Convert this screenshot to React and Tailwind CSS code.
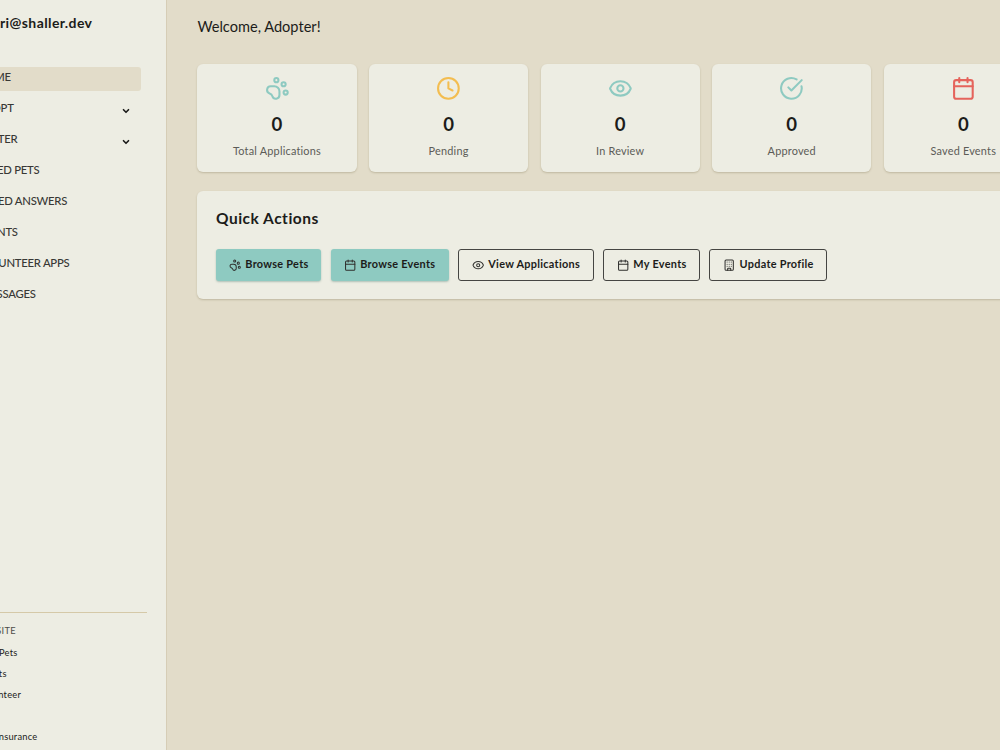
import { Building, Calendar, ChevronDown, CircleCheckBig, Clock, Eye, PawPrint } from "lucide-react";

const navItems = [
  { label: "HOME", active: true, indent: "ml-[5px]" },
  { label: "ADOPT", expandable: true, indent: "ml-[4px]" },
  { label: "FOSTER", expandable: true, indent: "ml-[5px]" },
  { label: "SAVED PETS", indent: "ml-[5px]" },
  { label: "SAVED ANSWERS", indent: "ml-[6px]" },
  { label: "EVENTS", indent: "ml-[5px]" },
  { label: "VOLUNTEER APPS", indent: "ml-[5px]" },
  { label: "MESSAGES", indent: "ml-[8px]" },
];

const stats = [
  { label: "Total Applications", value: 0, icon: PawPrint, color: "text-[#8ecac1]" },
  { label: "Pending", value: 0, icon: Clock, color: "text-[#f3bd50]" },
  { label: "In Review", value: 0, icon: Eye, color: "text-[#8ecac1]" },
  { label: "Approved", value: 0, icon: CircleCheckBig, color: "text-[#8ecac1]" },
  { label: "Saved Events", value: 0, icon: Calendar, color: "text-[#e5645c]" },
];

const actions = [
  { label: "Browse Pets", icon: PawPrint, primary: true, width: "w-[105.5px]" },
  { label: "Browse Events", icon: Calendar, primary: true, width: "w-[118px]" },
  { label: "View Applications", icon: Eye, width: "w-[136.5px]" },
  { label: "My Events", icon: Calendar, width: "w-[97px]" },
  { label: "Update Profile", icon: Building, width: "w-[118px]" },
];

function Sidebar() {
  return (
    <aside className="-ml-[42px] flex w-[208.5px] shrink-0 flex-col border-r border-[#d6cdb6] bg-[#edede3]">
      <p className="mt-[13px] ml-[42px] text-[14px] leading-5 font-bold tracking-[0.4px]">ri@shaller.dev</p>

      <nav className="mt-[33.5px] mr-[24.5px] flex flex-col gap-[6.2px]">
        {navItems.map((item) => (
          <div
            key={item.label}
            className={`flex h-[24.8px] items-center justify-between rounded-[3px] pr-[10px] pb-[2.6px] pl-[14px] text-[11.3px] font-medium tracking-[-0.25px] text-[#383835] ${item.active ? "bg-[#e2dcc9]" : ""}`}
          >
            <span className={`whitespace-nowrap ${item.indent}`}>{item.label}</span>
            {item.expandable && <ChevronDown className="relative top-[2px] size-[10px] text-[#1c1c1a]" strokeWidth={4} />}
          </div>
        ))}
      </nav>

      <div className="mt-auto mr-[19px] h-[138px] border-t border-[#d5c9a8] pl-[12px] text-[9.3px] tracking-[0.25px] text-[#1c1c1a]">
        <p className="mt-[12px] -ml-[2px] leading-3 text-[#4f4f4a]">MAIN SITE</p>
        <p className="mt-[10px] leading-3">Find a Pets</p>
        <p className="mt-[9px] ml-[8px] leading-3">Events</p>
        <p className="mt-[9px] ml-[9px] leading-3">Volunteer</p>
        <p className="mt-[30px] ml-[9px] leading-3">Pet Insurance</p>
      </div>
    </aside>
  );
}

function StatCard({ stat }) {
  const Icon = stat.icon;
  return (
    <div className="flex h-[108.3px] flex-col items-center rounded-[6px] bg-[#edede3] pt-[12.4px] shadow-[0_1px_2px_rgba(90,80,40,0.25)]">
      <Icon className={`size-[24.8px] ${stat.color}`} strokeWidth={2} />
      <p className="mt-[12px] text-[18.6px] leading-[22px] font-bold">{stat.value}</p>
      <p className="mt-[8.2px] text-[10.9px] leading-4 tracking-[0.2px] text-[#5c5c57]">{stat.label}</p>
    </div>
  );
}

function ActionButton({ action }) {
  const Icon = action.icon;
  return (
    <button
      className={`flex h-[31.4px] shrink-0 items-center justify-center gap-[4px] rounded-[3px] text-[10.9px] font-bold tracking-[0.28px] whitespace-nowrap ${action.width} ${
        action.primary ? "bg-[#8ecac1] shadow-[0_1px_2px_rgba(60,110,100,0.35)]" : "border border-[#454542]"
      }`}
    >
      <Icon className="mt-[1px] size-[12.4px] text-[#30302e]" strokeWidth={2} />
      <span className="-mt-[2.5px]">{action.label}</span>
    </button>
  );
}

export default function App() {
  return (
    <div className="flex h-screen overflow-hidden bg-[#e2dcc9] font-['Lato','Open_Sans',sans-serif] text-[#1c1c1a] [font-variant-ligatures:none]">
      <Sidebar />

      <main className="w-[876.4px] shrink-0 pl-[30.9px]">
        <h1 className="mt-[16.5px] text-[14.6px] leading-5">Welcome, Adopter!</h1>

        <section className="mt-[27px] grid grid-cols-5 gap-[12.4px]">
          {stats.map((stat) => (
            <StatCard key={stat.label} stat={stat} />
          ))}
        </section>

        <section className="mt-[18.8px] h-[108.3px] rounded-[6px] bg-[#edede3] px-[18.6px] pt-[17.5px] shadow-[0_1px_2px_rgba(90,80,40,0.25)]">
          <h2 className="text-[15.5px] leading-5 font-bold tracking-[0.5px]">Quick Actions</h2>
          <div className="mt-[21.4px] flex gap-[9.1px]">
            {actions.map((action) => (
              <ActionButton key={action.label} action={action} />
            ))}
          </div>
        </section>
      </main>
    </div>
  );
}
